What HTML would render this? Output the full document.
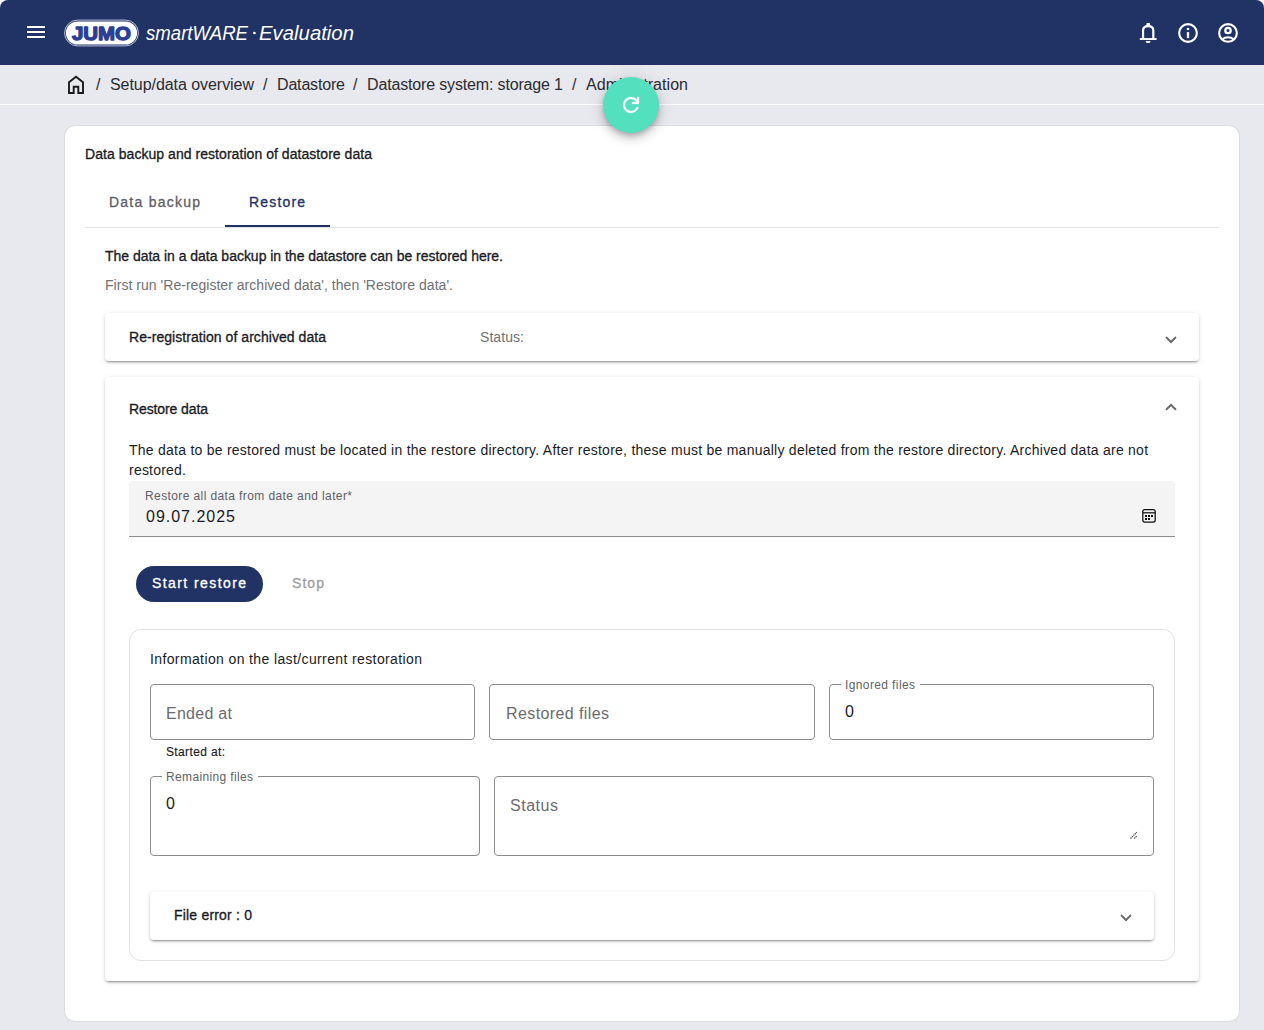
<!DOCTYPE html>
<html><head><meta charset="utf-8">
<style>
*{box-sizing:border-box;margin:0;padding:0}
html,body{width:1264px;height:1030px;overflow:hidden;background:#ffffff;font-family:"Liberation Sans",sans-serif}
.t{position:absolute;white-space:nowrap;line-height:1}
.b{position:absolute}
#bg{left:0;top:30px;width:1264px;height:1000px;background:#e8e9ee}
#hdr{left:0;top:0;width:1264px;height:65px;background:#213265;border-radius:8px 8px 0 0}
#wline{left:0;top:104px;width:1264px;height:1px;background:#ffffff}
#card{left:65px;top:126px;width:1174px;height:895px;background:#fff;border-radius:10px;box-shadow:0 0 0 1px #dcdde0}
#tabline{left:85px;top:227px;width:1134px;height:1px;background:#e3e3e6}
#tabul{left:225px;top:225px;width:105px;height:2px;background:#213265}
.panel{position:absolute;background:#fff;border-radius:4px;box-shadow:0 3px 1px -2px rgba(0,0,0,.2),0 2px 2px 0 rgba(0,0,0,.14),0 1px 5px 0 rgba(0,0,0,.12)}
#pan1{left:105px;top:313px;width:1094px;height:48px}
#pan2{left:105px;top:377px;width:1094px;height:604px}
#pan3{left:150px;top:892px;width:1004px;height:48px}
#fill{left:129px;top:481px;width:1046px;height:56px;background:#f4f4f4;border-radius:4px 4px 0 0;border-bottom:1px solid #8c8c90}
#btnbg{left:136px;top:566px;width:127px;height:36px;border-radius:18px;background:#213265}
#inner{left:129px;top:629px;width:1046px;height:332px;border:1px solid #e2e2e4;border-radius:12px}
.of{position:absolute;border:1px solid #8a8a8e;border-radius:4px}
#f1{left:150px;top:684px;width:325px;height:56px}
#f2{left:489px;top:684px;width:326px;height:56px}
#f3{left:829px;top:684px;width:325px;height:56px}
#f4{left:150px;top:776px;width:330px;height:80px}
#f5{left:494px;top:776px;width:660px;height:80px}
.gap{position:absolute;height:3px;background:#fff}
#fab{left:603px;top:77px;width:56px;height:56px;border-radius:28px;background:#52e0bf;box-shadow:0 3px 5px -1px rgba(0,0,0,.2),0 6px 10px 0 rgba(0,0,0,.14),0 1px 18px 0 rgba(0,0,0,.12)}
svg.ov{position:absolute;left:0;top:0;width:1264px;height:1030px}
</style></head>
<body>
<div class="b" id="bg"></div>
<div class="b" id="hdr"></div>
<div class="b" id="wline"></div>
<div class="b" id="card"></div>
<div class="b" id="tabline"></div>
<div class="b" id="tabul"></div>
<div class="panel" id="pan1"></div>
<div class="panel" id="pan2"></div>
<div class="b" id="fill"></div>
<div class="b" id="btnbg"></div>
<div class="b" id="inner"></div>
<div class="of" id="f1"></div>
<div class="of" id="f2"></div>
<div class="of" id="f3"></div>
<div class="of" id="f4"></div>
<div class="of" id="f5"></div>
<div class="gap" style="left:841px;top:683px;width:79px"></div>
<div class="gap" style="left:162px;top:775px;width:96px"></div>
<div class="panel" id="pan3"></div>
<div class="t" id="c1" style="left:110px;top:77px;font-size:16px;font-weight:400;color:#2b2b30;letter-spacing:-0.055px;">Setup/data overview</div>
<div class="t" id="c2" style="left:277px;top:77px;font-size:16px;font-weight:400;color:#2b2b30;letter-spacing:-0.172px;">Datastore</div>
<div class="t" id="c3" style="left:367px;top:77px;font-size:16px;font-weight:400;color:#2b2b30;letter-spacing:-0.157px;">Datastore system: storage 1</div>
<div class="t" id="c4" style="left:586px;top:77px;font-size:16px;font-weight:400;color:#2b2b30;letter-spacing:0.048px;">Administration</div>
<div class="t" id="s1" style="left:96px;top:77px;font-size:16px;font-weight:400;color:#2b2b30;">/</div>
<div class="t" id="s2" style="left:263px;top:77px;font-size:16px;font-weight:400;color:#2b2b30;">/</div>
<div class="t" id="s3" style="left:353px;top:77px;font-size:16px;font-weight:400;color:#2b2b30;">/</div>
<div class="t" id="s4" style="left:572px;top:77px;font-size:16px;font-weight:400;color:#2b2b30;">/</div>
<div class="t" id="title" style="left:85px;top:147px;font-size:14px;font-weight:400;color:#1b1b1f;-webkit-text-stroke:0.32px #1b1b1f;letter-spacing:0.049px;">Data backup and restoration of datastore data</div>
<div class="t" id="tab1" style="left:109px;top:195px;font-size:14px;font-weight:400;color:#5f5f66;-webkit-text-stroke:0.32px #5f5f66;letter-spacing:1.239px;">Data backup</div>
<div class="t" id="tab2" style="left:249px;top:195px;font-size:14px;font-weight:400;color:#213265;-webkit-text-stroke:0.32px #213265;letter-spacing:1.161px;">Restore</div>
<div class="t" id="p1" style="left:105px;top:249px;font-size:14px;font-weight:400;color:#1b1b1f;-webkit-text-stroke:0.32px #1b1b1f;letter-spacing:-0.020px;">The data in a data backup in the datastore can be restored here.</div>
<div class="t" id="p2" style="left:105px;top:278px;font-size:14px;font-weight:400;color:#707075;letter-spacing:0.033px;">First run 'Re-register archived data', then 'Restore data'.</div>
<div class="t" id="rr" style="left:129px;top:330px;font-size:14px;font-weight:400;color:#1b1b1f;-webkit-text-stroke:0.32px #1b1b1f;letter-spacing:0.054px;">Re-registration of archived data</div>
<div class="t" id="st" style="left:480px;top:330px;font-size:14px;font-weight:400;color:#707075;letter-spacing:0.068px;">Status:</div>
<div class="t" id="rd" style="left:129px;top:402px;font-size:14px;font-weight:400;color:#1b1b1f;-webkit-text-stroke:0.32px #1b1b1f;letter-spacing:-0.107px;">Restore data</div>
<div class="t" id="para1" style="left:129px;top:443px;font-size:14px;font-weight:400;color:#1b1b1f;letter-spacing:0.249px;">The data to be restored must be located in the restore directory. After restore, these must be manually deleted from the restore directory. Archived data are not</div>
<div class="t" id="para2" style="left:129px;top:463px;font-size:14px;font-weight:400;color:#1b1b1f;letter-spacing:0.219px;">restored.</div>
<div class="t" id="dlbl" style="left:145px;top:490px;font-size:12px;font-weight:400;color:#5f5f66;letter-spacing:0.395px;">Restore all data from date and later*</div>
<div class="t" id="dval" style="left:146px;top:509px;font-size:16px;font-weight:400;color:#1b1b1f;letter-spacing:0.991px;">09.07.2025</div>
<div class="t" id="btn" style="left:152px;top:576px;font-size:14px;font-weight:400;color:#ffffff;-webkit-text-stroke:0.32px #ffffff;letter-spacing:1.414px;">Start restore</div>
<div class="t" id="stop" style="left:292px;top:576px;font-size:14px;font-weight:400;color:#9d9da2;-webkit-text-stroke:0.3px #9d9da2;letter-spacing:1.062px;">Stop</div>
<div class="t" id="info" style="left:150px;top:652px;font-size:14px;font-weight:400;color:#1b1b1f;letter-spacing:0.380px;">Information on the last/current restoration</div>
<div class="t" id="ended" style="left:166px;top:706px;font-size:16px;font-weight:400;color:#6b6b70;letter-spacing:0.277px;">Ended at</div>
<div class="t" id="restf" style="left:506px;top:706px;font-size:16px;font-weight:400;color:#6b6b70;letter-spacing:0.398px;">Restored files</div>
<div class="t" id="ignl" style="left:845px;top:679px;font-size:12px;font-weight:400;color:#5f5f66;letter-spacing:0.385px;">Ignored files</div>
<div class="t" id="ign0" style="left:845px;top:704px;font-size:16px;font-weight:400;color:#1b1b1f;">0</div>
<div class="t" id="started" style="left:166px;top:746px;font-size:12px;font-weight:400;color:#1b1b1f;-webkit-text-stroke:0.15px #1b1b1f;letter-spacing:0.362px;">Started at:</div>
<div class="t" id="reml" style="left:166px;top:771px;font-size:12px;font-weight:400;color:#5f5f66;letter-spacing:0.354px;">Remaining files</div>
<div class="t" id="rem0" style="left:166px;top:796px;font-size:16px;font-weight:400;color:#1b1b1f;">0</div>
<div class="t" id="status" style="left:510px;top:798px;font-size:16px;font-weight:400;color:#6b6b70;letter-spacing:0.528px;">Status</div>
<div class="t" id="ferr" style="left:174px;top:908px;font-size:14px;font-weight:400;color:#1b1b1f;-webkit-text-stroke:0.32px #1b1b1f;letter-spacing:0.195px;">File error : 0</div>
<svg class="ov" viewBox="0 0 1264 1030">
 <!-- menu -->
 <g fill="#fff"><rect x="27" y="26" width="18" height="2"/><rect x="27" y="31" width="18" height="2"/><rect x="27" y="36" width="18" height="2"/></g>
 <!-- JUMO logo -->
 <rect x="64.6" y="20.1" width="73.8" height="25.8" rx="12.9" fill="none" stroke="#c9cfe6" stroke-width="0.9"/>
 <rect x="65.9" y="21.4" width="71.2" height="23.2" rx="11.6" fill="#fff"/>
 <text x="72" y="39.9" font-family="Liberation Sans" font-weight="700" font-size="18.6" fill="#2c3f93" stroke="#2c3f93" stroke-width="1.3" stroke-linejoin="round" textLength="59" lengthAdjust="spacingAndGlyphs">JUMO</text>
 <!-- product name -->
 <text x="146" y="39.6" font-family="Liberation Sans" font-style="italic" font-size="19.5" fill="#fff" textLength="102" lengthAdjust="spacingAndGlyphs">smartWARE</text>
 <circle cx="254.4" cy="33" r="1.35" fill="#fff"/>
 <text x="259" y="39.6" font-family="Liberation Sans" font-style="italic" font-size="19.5" fill="#fff" textLength="95" lengthAdjust="spacingAndGlyphs">Evaluation</text>
 <!-- bell -->
 <g fill="none" stroke="#fff" stroke-width="1.8">
  <path d="M1143.05,38.5 V30.6 C1143.05,27.5 1145.2,26.15 1148.2,26.15 C1151.2,26.15 1153.3,27.5 1153.3,30.6 V38.5" stroke-width="2.2"/>
  <line x1="1139.8" y1="39.05" x2="1156.6" y2="39.05" stroke-width="1.95"/>
  <circle cx="1188" cy="33" r="8.85" stroke-width="2.15"/>
  <circle cx="1228" cy="32.9" r="8.85" stroke-width="2.15"/>
  <circle cx="1228" cy="30.5" r="2.7" stroke-width="2.3"/>
  <path d="M1222,39.4 Q1228,35.1 1234,39.4" stroke-width="2"/>
 </g>
 <g fill="#fff">
  <rect x="1146.4" y="22.9" width="3.6" height="2.6" rx="0.9"/>
  <path d="M1145.6,40.9 L1150.6,40.9 Q1150.4,43.1 1148.1,43.1 Q1145.8,43.1 1145.6,40.9 Z"/>
  <rect x="1186.85" y="28" width="2.3" height="2.1"/>
  <rect x="1186.85" y="32.1" width="2.3" height="6"/>
 </g>
 <!-- home -->
 <path d="M69,93 V82.3 L76,76.8 L83,82.3 V93 H78.3 V86.7 H73.7 V93 Z" fill="none" stroke="#1a1a1a" stroke-width="1.9" stroke-linejoin="miter"/>
 <!-- chevrons -->
 <g fill="none" stroke="#68686b" stroke-width="2" stroke-linecap="round">
  <path d="M1166.6,337.6 L1171,342 L1175.4,337.6"/>
  <path d="M1166.6,409.2 L1171,404.8 L1175.4,409.2"/>
  <path d="M1121.6,915.6 L1126,920 L1130.4,915.6"/>
 </g>
 <!-- calendar -->
 <g fill="none" stroke="#111" stroke-width="1.25">
  <rect x="1142.8" y="509.6" width="12.4" height="12.4" rx="2"/>
  <line x1="1142.8" y1="512.8" x2="1155.2" y2="512.8"/>
 </g>
 <g fill="#111">
  <rect x="1145" y="515" width="2" height="2"/><rect x="1148" y="515" width="2" height="2"/><rect x="1151" y="515" width="2" height="2"/>
  <rect x="1145" y="518" width="2" height="2"/><rect x="1148" y="518" width="2" height="2"/>
 </g>
 <!-- resize handle -->
 <g stroke="#4a4a4a" stroke-width="1.15" stroke-dasharray="1.4 0.6">
  <line x1="1130.5" y1="838.5" x2="1136.8" y2="832.2"/>
  <line x1="1134.3" y1="838.5" x2="1136.8" y2="836"/>
 </g>
</svg>
<div class="b" id="fab"></div>
<svg class="ov" viewBox="0 0 1264 1030">
 <path transform="translate(619,93) scale(0.025) translate(0,960)" fill="#fff" stroke="#fff" stroke-width="10" d="M480-160q-134 0-227-93t-93-227q0-134 93-227t227-93q69 0 132 28.5T720-690v-110h80v280H520v-80h168q-32-56-87.5-88T480-720q-100 0-170 70t-70 170q0 100 70 170t170 70q77 0 139-44t87-116h84q-28 106-114 173t-196 67Z"/>
</svg>
</body></html>
